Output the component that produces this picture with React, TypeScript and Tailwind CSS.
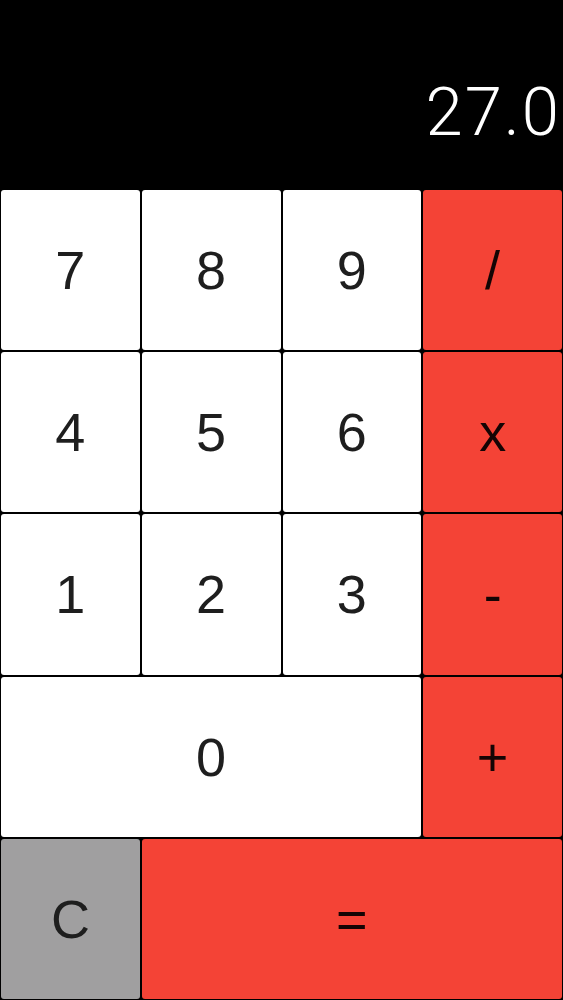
const KEYS = [
  { label: "7", kind: "num" },
  { label: "8", kind: "num" },
  { label: "9", kind: "num" },
  { label: "/", kind: "op" },
  { label: "4", kind: "num" },
  { label: "5", kind: "num" },
  { label: "6", kind: "num" },
  { label: "x", kind: "op" },
  { label: "1", kind: "num" },
  { label: "2", kind: "num" },
  { label: "3", kind: "num" },
  { label: "-", kind: "op" },
  { label: "0", kind: "num", span: "col-span-3" },
  { label: "+", kind: "op" },
  { label: "C", kind: "clear" },
  { label: "=", kind: "op", span: "col-span-3" },
] as const;

const BG = {
  num: "bg-white text-[#1e1e1e]",
  op: "bg-[#f44336] text-[#140404]",
  clear: "bg-[#a09fa0] text-[#1e1e1e]",
};

export default function App() {
  return (
    <div className="flex h-[1000px] w-[563px] flex-col bg-black font-['Liberation_Sans',Arial,sans-serif]">
      <div className="flex h-[189px] items-center justify-end pr-[2px] pt-[36px]">
        <span className="font-['Roboto',sans-serif] text-[67px] font-light leading-none tracking-[2px] text-white">
          27.0
        </span>
      </div>
      <div className="grid flex-1 grid-cols-4 grid-rows-5 gap-[2px] p-px">
        {KEYS.map((k) => (
          <button
            key={k.label}
            type="button"
            className={`flex items-center justify-center rounded-[3px] text-[54px] leading-none ${BG[k.kind]} ${"span" in k ? k.span : ""}`}
          >
            {k.label}
          </button>
        ))}
      </div>
    </div>
  );
}
